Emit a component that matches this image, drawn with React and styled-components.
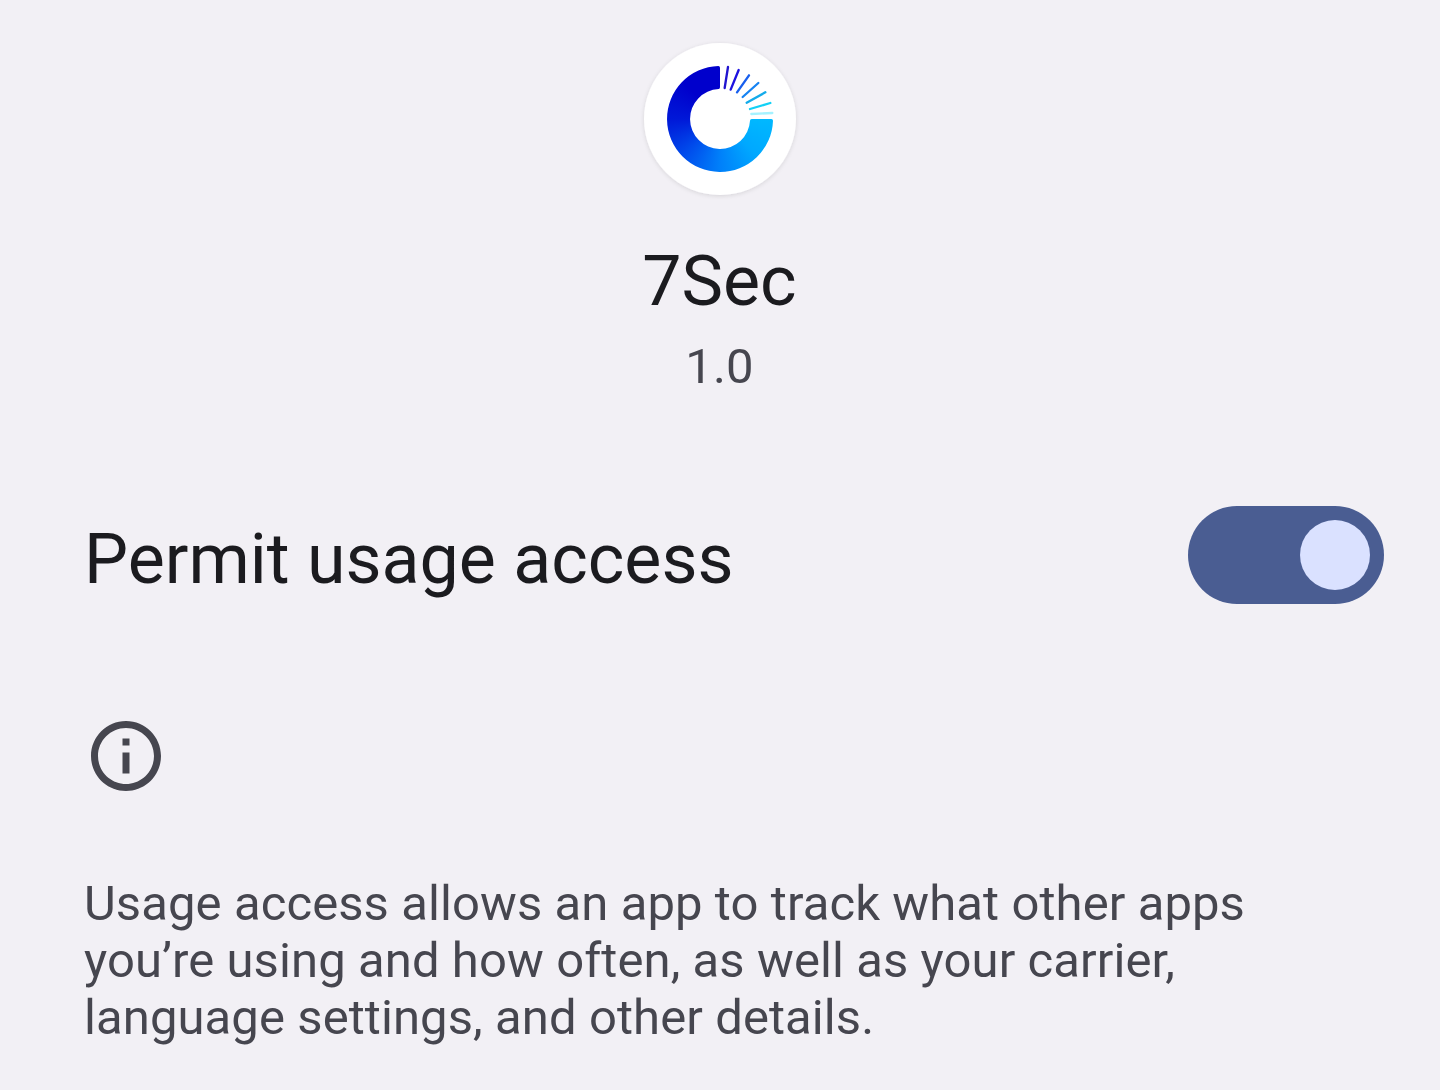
import React from 'react';
import styled, { createGlobalStyle } from 'styled-components';

const GlobalStyle = createGlobalStyle`
  * { box-sizing: border-box; }
  body { margin: 0; background: #f2f0f5; }
`;

const Screen = styled.main`
  display: flex;
  flex-direction: column;
  width: 1440px;
  height: 1090px;
  overflow: hidden;
  padding-top: 30px;
  background: #f2f0f5;
  color: #1b1b1f;
  font-family: Roboto, sans-serif;
`;

const AppHeader = styled.header`
  display: flex;
  flex-direction: column;
  align-items: center;
`;

const Logo = styled.svg`
  display: block;
  width: 180px;
  height: 180px;
`;

const RingSweep = styled.div`
  width: 320px;
  height: 320px;
  background: conic-gradient(
    #00b8ff 0deg 90deg,
    #00a8ff 135deg,
    #0080fa 180deg,
    #004cec 225deg,
    #0018d8 270deg,
    #0000cc 315deg 360deg
  );
`;

const AppName = styled.h1`
  margin: 29px 0 0;
  padding-right: 1px;
  font-size: 69.9px;
  font-weight: 400;
  line-height: 84px;
`;

const Version = styled.p`
  margin: 15px 0 0;
  padding-right: 1px;
  color: #46464f;
  font-size: 49px;
  line-height: 57px;
  letter-spacing: 0.1px;
`;

const PermissionRow = styled.section`
  display: flex;
  justify-content: space-between;
  align-items: flex-start;
  margin-top: 111px;
  padding: 0 56px 0 84px;
`;

const PermissionLabel = styled.span`
  padding-top: 11px;
  font-size: 69.9px;
  line-height: 84px;
`;

const Switch = styled.button`
  display: flex;
  align-items: center;
  justify-content: ${(p) => (p.$on ? 'flex-end' : 'flex-start')};
  width: 196px;
  height: 98px;
  padding: 14px;
  border: 0;
  border-radius: 49px;
  background: #4a5d92;
`;

const Thumb = styled.span`
  width: 70px;
  height: 70px;
  border-radius: 50%;
  background: #dae1ff;
`;

const Details = styled.section`
  display: flex;
  flex-direction: column;
  gap: 77px;
  margin-top: 110px;
  padding: 0 84px;
`;

const InfoIcon = styled.svg`
  display: block;
  width: 84px;
  height: 84px;
  fill: #46464f;
`;

const Description = styled.p`
  margin: 0;
  color: #46464f;
  font-size: 49px;
  line-height: 57px;
  letter-spacing: 0.09px;
`;

const rays = [
  ['M294 111L284 174', '#2014cf'],
  ['M326 120L302 179', '#1d12e0'],
  ['M357 136L321 187', '#185fee'],
  ['M385 159L338 201', '#1683f2'],
  ['M406 187L350 218', '#14abea'],
  ['M421 219L360 237', '#12d1f6'],
  ['M427 249L364 252', '#a5f2ff'],
];

function AppLogo() {
  return (
    <Logo viewBox="0 0 540 540" aria-label="7Sec logo">
      <defs>
        <clipPath id="ring">
          <path d="M265 108A159 159 0 1 0 429 272Q429 267 424 267H365Q360 267 360 272A90 90 0 1 1 266 177Q270 177 270 172V113Q270 108 265 108Z" />
        </clipPath>
        <filter id="shadow" x="-10%" y="-10%" width="120%" height="120%">
          <feDropShadow dx="0" dy="3" stdDeviation="6" floodColor="#000" floodOpacity="0.12" />
        </filter>
      </defs>
      <circle cx="270" cy="267" r="228" fill="#fff" filter="url(#shadow)" />
      <g clipPath="url(#ring)">
        <foreignObject x="110" y="107" width="320" height="320">
          <RingSweep />
        </foreignObject>
      </g>
      {rays.map(([d, color]) => (
        <path key={d} d={d} stroke={color} strokeWidth="7" strokeLinecap="round" />
      ))}
    </Logo>
  );
}

export default function App() {
  return (
    <>
      <GlobalStyle />
      <Screen>
        <AppHeader>
          <AppLogo />
          <AppName>7Sec</AppName>
          <Version>1.0</Version>
        </AppHeader>
        <PermissionRow>
          <PermissionLabel>Permit usage access</PermissionLabel>
          <Switch type="button" role="switch" aria-checked="true" aria-label="Permit usage access" $on>
            <Thumb />
          </Switch>
        </PermissionRow>
        <Details>
          <InfoIcon viewBox="0 0 24 24" aria-hidden="true">
            <path d="M11 7h2v2h-2zM11 11h2v6h-2zM12 2C6.48 2 2 6.48 2 12s4.48 10 10 10 10-4.48 10-10S17.52 2 12 2zm0 18c-4.41 0-8-3.59-8-8s3.59-8 8-8 8 3.59 8 8-3.59 8-8 8z" />
          </InfoIcon>
          <Description>
            Usage access allows an app to track what other apps
            <br />
            you’re using and how often, as well as your carrier,
            <br />
            language settings, and other details.
          </Description>
        </Details>
      </Screen>
    </>
  );
}
